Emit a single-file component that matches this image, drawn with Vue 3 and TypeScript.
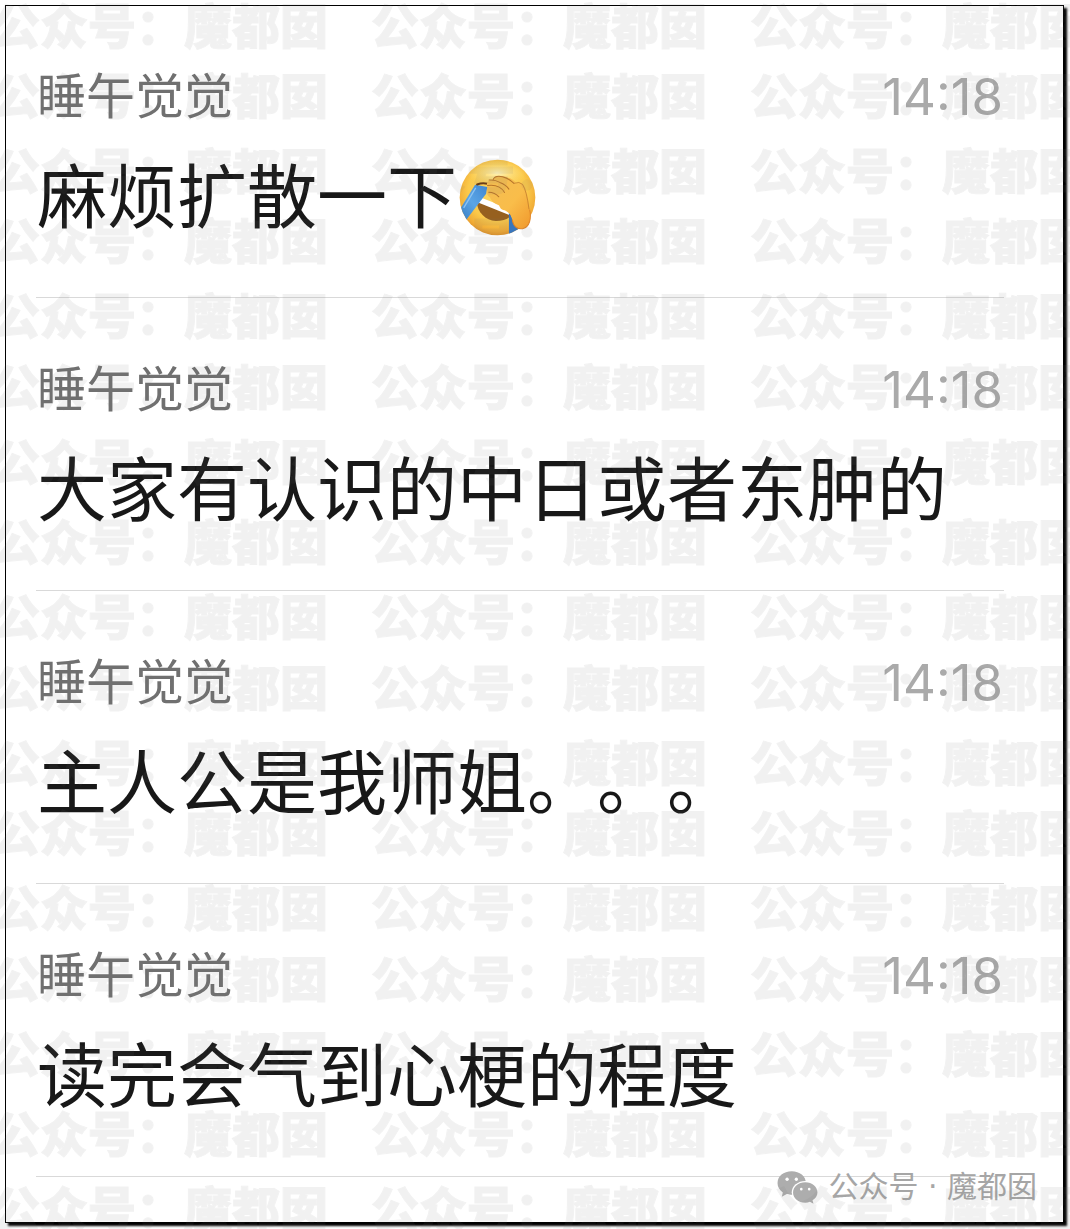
<script setup lang="ts">
interface Message {
  id: number
  author: string
  time: string
  text: string
  emoji?: boolean
}

const messages: Message[] = [
  { id: 1, author: '睡午觉觉', time: '14:18', text: '麻烦扩散一下', emoji: true },
  { id: 2, author: '睡午觉觉', time: '14:18', text: '大家有认识的中日或者东肿的' },
  { id: 3, author: '睡午觉觉', time: '14:18', text: '主人公是我师姐。。。' },
  { id: 4, author: '睡午觉觉', time: '14:18', text: '读完会气到心梗的程度' },
]

const watermark = '公众号：魔都囡'
// Height of each watermark line, top to bottom
const watermarkRows: number[] = [70, 75, 70, 75, 71, 75, 80, 75, 71, 75, 70, 75, 71, 75, 80, 75, 71]
</script>

<template>
  <div class="page">
    <main class="frame">
      <ul class="list">
        <li v-for="m in messages" :key="m.id" class="item">
          <div class="meta">
            <span class="author">{{ m.author }}</span>
            <time class="time">{{ m.time }}</time>
          </div>
          <p class="text">
            <span>{{ m.text }}</span>
            <svg v-if="m.emoji" class="emoji" viewBox="58 56 230 230" aria-hidden="true">
              <defs>
                <radialGradient id="face" cx="50%" cy="42%" r="60%">
                  <stop offset="0" stop-color="#fdd866" />
                  <stop offset="0.65" stop-color="#fbc94a" />
                  <stop offset="0.88" stop-color="#f0aa35" />
                  <stop offset="1" stop-color="#d98a24" />
                </radialGradient>
                <radialGradient id="shine">
                  <stop offset="0" stop-color="#fff6c4" stop-opacity="0.9" />
                  <stop offset="1" stop-color="#ffe680" stop-opacity="0" />
                </radialGradient>
                <linearGradient id="hand" x1="0" y1="0" x2="1" y2="1">
                  <stop offset="0" stop-color="#f3bd52" />
                  <stop offset="0.55" stop-color="#f9bd4a" />
                  <stop offset="1" stop-color="#f0982c" />
                </linearGradient>
                <linearGradient id="tear" x1="0" y1="1" x2="1" y2="0">
                  <stop offset="0" stop-color="#3478bd" />
                  <stop offset="0.5" stop-color="#5ba5e6" />
                  <stop offset="1" stop-color="#3f86d0" />
                </linearGradient>
                <clipPath id="faceClip"><circle cx="173" cy="171" r="113" /></clipPath>
              </defs>
              <circle cx="173" cy="171" r="113" fill="url(#face)" />
              <ellipse cx="172" cy="98" rx="90" ry="38" fill="url(#shine)" />
              <path d="M112 182 C110 212 136 240 168 241 C190 241 208 234 218 220 L205 208 Z" fill="#96601f" />
              <path d="M121 170 L212 206 L210 224 L115 186 Z" fill="#fff" />
              <g clip-path="url(#faceClip)">
                <path d="M106 133 L143 140 L139 160 L78 240 L54 217 Z" fill="url(#tear)" />
                <path d="M108 142 L72 202" stroke="#8bc3f2" stroke-width="4" fill="none" />
                <path d="M207 215 L233 260 L238 280 L207 282 Z" fill="#3976bd" />
              </g>
              <path d="M112 132 Q128 126 143 130" stroke="#693b16" stroke-width="6" fill="none" stroke-linecap="round" />
              <path
                d="M143 140 C137 126 148 118 159 117 C163 105 184 105 196 109 C211 113 222 119 229 128 C241 121 253 130 258 147 C264 168 266 188 269 207 C275 234 269 258 249 264 C232 267 220 257 217 237 C213 219 204 214 194 209 C182 208 180 198 177 194 C163 190 154 180 151 171 C139 165 139 150 143 140 Z"
                fill="url(#hand)"
              />
              <g fill="none" stroke="#b8752a" stroke-width="3" stroke-linecap="round">
                <path d="M160 117 Q166 104 188 109 Q207 114 222 129" />
                <path d="M148 119 Q165 117 180 126 Q199 133 207 146" />
                <path d="M143 135 Q164 132 178 140 Q189 146 194 156" />
                <path d="M147 155 Q165 155 177 169" />
                <path d="M224 128 Q238 122 248 132 Q260 151 267 205" stroke-width="2" />
              </g>
              <path d="M269 207 C275 234 269 258 249 264 C232 267 220 257 217 237" fill="none" stroke="#df8427" stroke-width="3" />
            </svg>
          </p>
        </li>
      </ul>
      <footer class="source">
        <svg class="logo" viewBox="50 88 123 100" aria-hidden="true">
          <defs>
            <mask id="bubbleGap">
              <rect x="40" y="80" width="140" height="115" fill="#fff" />
              <ellipse cx="135" cy="153" rx="41" ry="35" fill="#000" />
              <circle cx="80" cy="113" r="5" fill="#000" />
              <circle cx="108" cy="113" r="5" fill="#000" />
            </mask>
          </defs>
          <path
            mask="url(#bubbleGap)"
            d="M94 89 C69 89 51 104 51 125 C51 136 57 146 67 153 L64 166 L79 158 C84 160 89 160 95 160 C119 160 137 145 137 125 C137 104 118 89 94 89 Z"
          />
          <path
            fill-rule="evenodd"
            d="M135 122 C114 122 98 136 98 153 C98 171 114 184 135 184 C140 184 145 183 149 181 L160 187 L157 177 C166 171 172 163 172 153 C172 136 156 122 135 122 Z M123 139 a4 4 0 1 1 0 8 a4 4 0 1 1 0 -8 Z M147 139 a4 4 0 1 1 0 8 a4 4 0 1 1 0 -8 Z"
          />
        </svg>
        <span>公众号 · 魔都囡</span>
      </footer>
    </main>
    <div class="watermark" aria-hidden="true">
      <div v-for="(h, i) in watermarkRows" :key="i" class="watermark-row" :style="{ height: h + 'px' }">
        <span v-for="n in 3" :key="n">{{ watermark }}</span>
      </div>
    </div>
  </div>
</template>

<style>
body {
  margin: 0;
  background: #fefefe;
}
</style>

<style scoped>
.page {
  position: relative;
  overflow: hidden;
  padding: 5px 6px 6px 5px;
  font-family: 'Noto Sans CJK SC', sans-serif;
}

.frame {
  position: relative;
  padding: 0 60px 46px 31px;
  background: #fff;
  box-shadow: inset 0 0 0 1px #000, 3px 3px 2px #000;
}

.list {
  margin: 0;
  padding: 0;
  list-style: none;
}

.item {
  padding: 52px 0;
  border-bottom: 1px solid #d9d9d9;
}

.meta {
  display: flex;
  justify-content: space-between;
  align-items: flex-start;
  height: 72px;
  padding: 0 1px;
}

.author {
  font-size: 49px;
  line-height: 72px;
  color: #707070;
}

.time {
  font-family: Inter, sans-serif;
  font-size: 51px;
  line-height: 80px;
  color: #aaa;
}

.text {
  display: flex;
  align-items: flex-start;
  margin: 12px 0 0;
  padding: 0 1px;
  font-size: 70px;
  line-height: 104px;
  text-spacing-trim: space-all;
  color: #181818;
}

.emoji {
  width: 77px;
  height: 77px;
  margin: 18px 0 0 2px;
}

.source {
  position: absolute;
  right: 27px;
  bottom: 14px;
  display: flex;
  align-items: center;
  gap: 10px;
  font-family: 'DejaVu Sans', 'Noto Sans CJK SC', sans-serif;
  font-size: 30px;
  line-height: 44px;
  color: #a6a6a6;
}

.logo {
  width: 41px;
  height: 33px;
  fill: #adadad;
}

.watermark {
  position: absolute;
  inset: 0;
  overflow: hidden;
  opacity: 0.09;
  pointer-events: none;
  user-select: none;
}

.watermark-row {
  display: flex;
  gap: 43px;
  margin-left: -8px;
  font-size: 48px;
  font-weight: 900;
  line-height: 46px;
  white-space: nowrap;
  color: #737373;
  -webkit-text-stroke: 1px #737373;
}
</style>
